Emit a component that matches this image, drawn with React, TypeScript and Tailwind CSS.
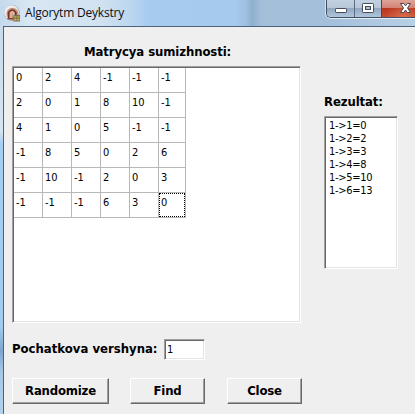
import React from "react";

const matrix = [
  [0, 2, 4, -1, -1, -1],
  [2, 0, 1, 8, 10, -1],
  [4, 1, 0, 5, -1, -1],
  [-1, 8, 5, 0, 2, 6],
  [-1, 10, -1, 2, 0, 3],
  [-1, -1, -1, 6, 3, 0],
];

const results = ["1->1=0", "1->2=2", "1->3=3", "1->4=8", "1->5=10", "1->6=13"];

const SUNKEN =
  "border border-t-[#a0a0a0] border-l-[#a0a0a0] border-r-white border-b-white bg-white shadow-[inset_1px_1px_0_#696969,inset_-1px_-1px_0_#e3e3e3]";

const BOLD = "font-['DejaVu_Sans_Condensed','DejaVu_Sans',sans-serif] font-bold text-[13px] leading-4 whitespace-nowrap";

function AppIcon() {
  return (
    <svg width="17" height="17" viewBox="0 0 17 17" className="shrink-0">
      <circle cx="8" cy="8" r="7.9" fill="#a9a4a6" />
      <circle cx="7.6" cy="7.6" r="7.3" fill="#f1eeed" />
      <circle cx="8.4" cy="8.8" r="6" fill="#bb9184" />
      <path d="M4.600 13V7.500Q8.200 2.500 11.800 7.500V11" fill="none" stroke="#7a3022" strokeWidth="1.5" />
      <path d="M7 13V7.900Q8.200 6 9.400 7.900V11" fill="none" stroke="#f0c0a4" strokeWidth="1.2" />
      <path d="M3.500 13.800h6" stroke="#6b2c22" strokeWidth="1.2" />
      <path d="M9.500 10h6.500v6.500H9.500z" fill="#7d6c48" />
      <path d="M10.300 10.900h2.100v1.900h-2.100zM13.300 10.900h2v1.900h-2z" fill="#b9a54c" />
      <path d="M10.300 13.700h2.100v1.900h-2.100zM13.300 13.700h2v1.900h-2z" fill="#cbbb62" />
    </svg>
  );
}

function TitleBar() {
  return (
    <header className="flex h-[26px] shrink-0 bg-[linear-gradient(90deg,#c4d9ec_0px,#d9e7f3_30px,#d2e2f1_100px,#bcd7ef_130px,#a5cbef_150px,#a6caed_235px,#9fc0e0_246px,#8fb0cf_252px,#a5bfda_262px,#a3bfdb_330px,#b9d0e5_415px)]">
      <div className="flex w-[326px] items-start pl-1 pt-[5px]">
        <AppIcon />
        <span className="ml-1 mt-px whitespace-nowrap font-['Open_Sans','Noto_Sans',sans-serif] text-[12px] leading-[14px] tracking-[-0.2px] text-[#0b0f16]">
          Algorytm Deykstry
        </span>
      </div>
      <div className="flex h-[18px] w-[89px] overflow-hidden rounded-bl-[5px] border-b border-l border-[#434f60] shadow-[0_1px_0_#e1edf7,-1px_0_0_#d3e2f0]">
        <div className="w-[28px] border-r border-[#5c6b7f] bg-[linear-gradient(#c2d0e0_0,#b7c7d9_45%,#92a8c1_50%,#b0c6dd_100%)]">
          <svg width="27" height="17" viewBox="0 0 27 17">
            <rect x="8.5" y="8.5" width="11" height="4" rx=".7" fill="#fff" stroke="#454d5d" />
          </svg>
        </div>
        <div className="w-[27px] border-r border-[#5c3f49] bg-[linear-gradient(#c2d0e0_0,#b7c7d9_45%,#92a8c1_50%,#b0c6dd_100%)]">
          <svg width="26" height="17" viewBox="0 0 26 17">
            <rect x="7.5" y="3.5" width="11" height="9" rx=".7" fill="#fff" stroke="#454d5d" />
            <rect x="10.5" y="6.5" width="5" height="3" fill="#aebfd2" stroke="#454d5d" />
          </svg>
        </div>
        <div className="flex-1 bg-[radial-gradient(circle_at_65%_110%,#e58a6399,transparent_65%),linear-gradient(#dfa498_0,#d18376_45%,#b93420_50%,#c8492f_100%)]">
          <svg width="33" height="17" viewBox="0 0 33 17">
            <path
              d="M18.500 3.500h3.200l1.800 2.300 1.800-2.300h3.200l-3 4.500 3 4.500h-3.200l-1.800-2.400-1.800 2.400h-3.200l3-4.500z"
              fill="#fff"
              stroke="#4c4650"
            />
          </svg>
        </div>
      </div>
    </header>
  );
}

function PushButton({ label, className }: { label: string; className: string }) {
  return (
    <button
      className={`flex h-[26px] items-center justify-center border border-l-white border-t-white border-b-[#696969] border-r-[#696969] bg-[#efefef] text-black shadow-[inset_-1px_-1px_0_#a0a0a0] ${BOLD} tracking-[-0.2px] ${className}`}
    >
      {label}
    </button>
  );
}

export default function App() {
  return (
    <div className="flex h-[414px] w-[415px] flex-col overflow-hidden bg-[#b8d2ea] text-black">
      <TitleBar />
      <div className="flex min-h-0 flex-1">
        <div className="w-[3px] shrink-0 bg-[linear-gradient(#c7dbed_0px,#d6e5f2_105px,#a6cdf2_118px,#a3caef_300px,#7da5cd_325px,#a5c7e8_345px,#b4d1ed_388px)]" />
        <main className="flex flex-1 border-l border-t border-[#4b637f] bg-[#efefef] pl-2">
          <section className="flex w-[290px] shrink-0 flex-col">
            <h1 className={`ml-[72px] mt-[17px] ${BOLD} tracking-[-0.1px]`}>Matrycya sumizhnosti:</h1>
            <div className={`mt-[6px] h-[257px] w-[289px] pl-px pt-px ${SUNKEN}`}>
              <div className="grid w-[172px] grid-cols-[repeat(5,29px)_27px] grid-rows-[repeat(6,25px)]">
                {matrix.flatMap((row, r) =>
                  row.map((value, c) => (
                    <div
                      key={`${r}-${c}`}
                      className="relative border-b border-r border-[#b8b8b8] pl-[2px] pt-[3px] font-['DejaVu_Sans_Condensed','DejaVu_Sans',sans-serif] text-[11px] leading-[14px]"
                    >
                      {value}
                      {r === 5 && c === 5 && (
                        <span className="absolute inset-0 border border-dotted border-black" />
                      )}
                    </div>
                  )),
                )}
              </div>
            </div>
            <div className="mt-[15px] flex h-[22px] items-center">
              <label className={`w-[151px] ${BOLD}`}>Pochatkova vershyna:</label>
              <input
                readOnly
                value="1"
                className={`ml-px h-[21px] w-[41px] rounded-none px-[2px] py-0 font-['DejaVu_Sans_Condensed','DejaVu_Sans',sans-serif] text-[11px] leading-4 outline-none ${SUNKEN}`}
              />
            </div>
            <div className="mt-[18px] flex">
              <PushButton label="Randomize" className="w-[97px]" />
              <PushButton label="Find" className="ml-[21px] w-[75px]" />
              <PushButton label="Close" className="ml-[22px] w-[75px]" />
            </div>
          </section>
          <section className="ml-[22px] flex flex-col">
            <h2 className={`mt-[67px] ${BOLD} tracking-[-0.1px]`}>Rezultat:</h2>
            <ul
              className={`mt-[6px] h-[153px] w-[74px] pl-[4px] pt-[2px] font-['DejaVu_Sans_Condensed','DejaVu_Sans',sans-serif] text-[11px] leading-[13px] tracking-[-0.3px] ${SUNKEN}`}
            >
              {results.map((line) => (
                <li key={line}>{line}</li>
              ))}
            </ul>
          </section>
        </main>
      </div>
    </div>
  );
}
